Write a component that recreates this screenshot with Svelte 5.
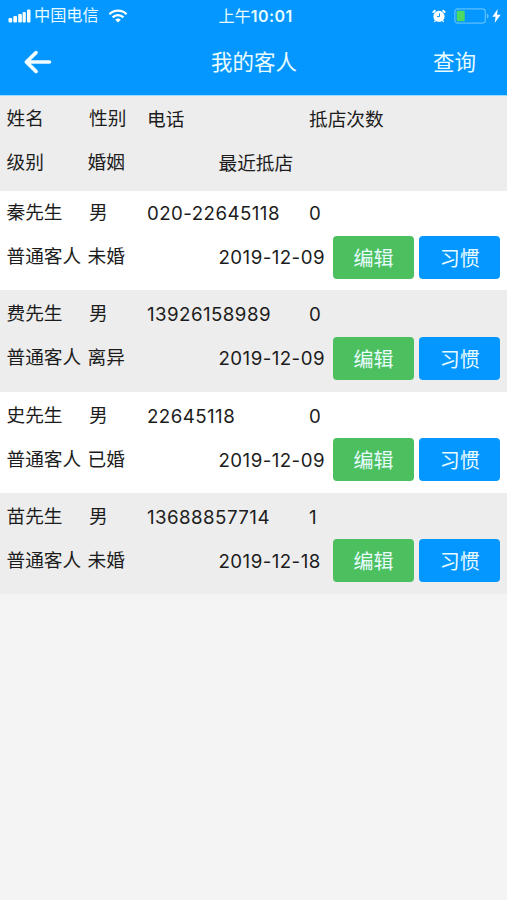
<script>
  let guests = [
    { name: "秦先生", sex: "男", phone: "020-22645118", visits: 0, level: "普通客人", marriage: "未婚", last: "2019-12-09" },
    { name: "费先生", sex: "男", phone: "13926158989", visits: 0, level: "普通客人", marriage: "离异", last: "2019-12-09" },
    { name: "史先生", sex: "男", phone: "22645118", visits: 0, level: "普通客人", marriage: "已婚", last: "2019-12-09" },
    { name: "苗先生", sex: "男", phone: "13688857714", visits: 1, level: "普通客人", marriage: "未婚", last: "2019-12-18" },
  ];
</script>

<div class="page">
  <header>
    <div class="status">
      <div class="carrier">
        <svg width="24" height="14" viewBox="0 0 24 14" fill="#fff">
          <rect x="0.5" y="9" width="3.7" height="4.5" rx="1" />
          <rect x="5.3" y="7" width="3.7" height="6.5" rx="1" />
          <rect x="10.2" y="5" width="3.7" height="8.5" rx="1" />
          <rect x="14.6" y="3" width="3.2" height="10.5" rx="1" />
          <rect x="19" y="0.5" width="3.5" height="13" rx="1" />
        </svg>
        <span>中国电信</span>
        <svg class="wifi" width="20" height="14" viewBox="0 0 20 14" fill="none" stroke="#fff" stroke-width="2.3">
          <path d="M1.4 5.2a12.2 12.2 0 0 1 17.2 0" />
          <path d="M4.6 8.4a7.7 7.7 0 0 1 10.8 0" />
          <path d="M10 13.6 7.2 10.8a4 4 0 0 1 5.6 0z" fill="#fff" stroke="none" />
        </svg>
      </div>
      <div class="time">上午<b>10:01</b></div>
      <div class="power">
        <svg width="14" height="14" viewBox="0 0 14 14">
          <circle cx="7" cy="7.4" r="5.6" fill="#fff" />
          <path d="M1.3 3.1 2.8 1.7M12.7 3.1 11.2 1.7" stroke="#fff" stroke-width="1.9" stroke-linecap="round" />
          <path d="M3.2 11.8 2.6 12.6M10.8 11.8l.6.8" stroke="#fff" stroke-width="1.2" stroke-linecap="round" />
          <path d="M7.5 4.4v3.2H5" fill="none" stroke="#0397ff" stroke-width="1" />
        </svg>
        <svg class="battery" width="36" height="16" viewBox="0 0 36 16">
          <rect x="0.9" y="0.9" width="30.4" height="14.2" rx="2.8" fill="none" stroke="#5cbfff" stroke-width="1.2" />
          <rect x="2.7" y="2.8" width="8" height="10.4" rx="0.8" fill="#4cd964" />
          <path d="M32.8 5.4c2.4.6 2.4 4.6 0 5.2z" fill="#5cbfff" />
        </svg>
        <svg width="9" height="14" viewBox="0 0 9 14">
          <path d="M5.6 0 0.4 7.8h3.2L2.7 14 8.6 5.8H5.1z" fill="#fff" />
        </svg>
      </div>
    </div>
    <nav>
      <svg class="back" width="28" height="24" viewBox="0 0 28 24" fill="none" stroke="#f2fdff" stroke-width="3.6" stroke-linecap="round" stroke-linejoin="round">
        <path d="M12 2.6 2.4 12l9.6 9.4M3 12h22.5" />
      </svg>
      <h1>我的客人</h1>
      <span class="search">查询</span>
    </nav>
  </header>

  <div class="item head">
    <div class="line top">
      <span class="cn">姓名</span>
      <span class="cn">性别</span>
      <span>电话</span>
      <span>抵店次数</span>
    </div>
    <div class="line bottom">
      <span class="cn">级别</span>
      <span class="cn">婚姻</span>
      <span>最近抵店</span>
    </div>
  </div>

  {#each guests as guest}
    <div class="item">
      <div class="line top">
        <span class="cn">{guest.name}</span>
        <span class="cn">{guest.sex}</span>
        <span class="num">{guest.phone}</span>
        <span class="num">{guest.visits}</span>
      </div>
      <div class="line bottom">
        <span class="cn">{guest.level}</span>
        <span class="cn">{guest.marriage}</span>
        <span class="num">{guest.last}</span>
        <button class="edit">编辑</button>
        <button class="habit">习惯</button>
      </div>
    </div>
  {/each}
</div>

<style>
  :global(body) {
    margin: 0;
    background: #f4f4f4;
  }

  .page {
    min-height: 900px;
    font-family: Inter, "Noto Sans CJK SC", sans-serif;
    font-size: 18.7px;
    color: #1c1c1c;
  }

  header {
    box-sizing: border-box;
    height: 96px;
    border-bottom: 1px solid #9bdcff;
    background: #0397ff;
    color: #e8fbff;
  }

  .status {
    display: grid;
    grid-template-columns: 1fr auto 1fr;
    align-items: center;
    height: 29px;
    padding: 0 6px 0 8px;
    font-size: 16.2px;
    line-height: 29px;
  }

  .carrier,
  .power {
    display: flex;
    align-items: center;
  }

  .carrier span {
    margin-left: 2px;
  }

  .wifi {
    margin-left: 9px;
  }

  .time {
    margin-top: 2px;
    padding-left: 2px;
  }

  .time b {
    font-weight: 600;
    font-size: 16px;
    letter-spacing: 0.4px;
  }

  .power {
    justify-content: flex-end;
  }

  .battery {
    margin: 0 2px 0 8px;
  }

  nav {
    display: grid;
    grid-template-columns: 1fr auto 1fr;
    align-items: center;
    height: 66px;
    padding: 0 31px 0 24px;
  }

  h1 {
    margin: -4px 0 0;
    padding-left: 8px;
    font-size: 21.5px;
    font-weight: 400;
  }

  .search {
    justify-self: end;
    margin-top: -4px;
    font-size: 21.5px;
  }

  .item {
    box-sizing: border-box;
    height: 101.3px;
    padding: 3px 0 0 6.5px;
    background: #fff;
  }

  .item:nth-child(even) {
    background: #ededed;
  }

  .head {
    height: 95px;
    padding-top: 2px;
  }

  .head + .item {
    height: 99.3px;
    padding-top: 1px;
  }

  .line {
    display: grid;
    align-items: center;
    height: 44px;
    line-height: 44px;
    white-space: nowrap;
  }

  .top {
    grid-template-columns: 82.5px 58px 162px 1fr;
  }

  .bottom {
    grid-template-columns: 81px 131px 114.5px 86.3px 81px;
  }

  .cn {
    margin-top: -2px;
  }

  .num {
    letter-spacing: 0.45px;
  }

  button {
    width: 81px;
    height: 43px;
    margin-top: -2px;
    padding: 0;
    border: 0;
    border-radius: 4px;
    color: #e8fbff;
    font-family: inherit;
    font-size: 20px;
  }

  .edit {
    background: #4cc05f;
  }

  .habit {
    background: #0397ff;
  }
</style>
